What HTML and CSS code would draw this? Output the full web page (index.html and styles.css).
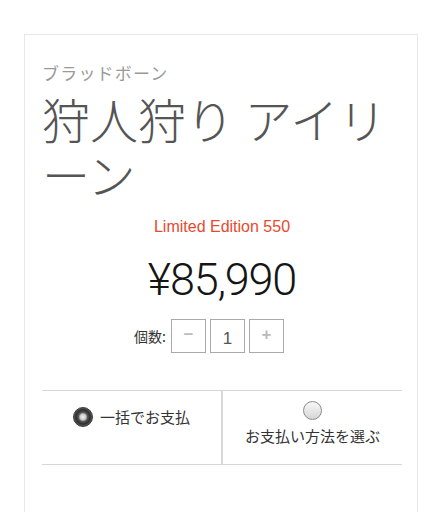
FILE: index.html
```html
<!DOCTYPE html>
<html lang="ja">
<head>
  <meta charset="UTF-8">
  <meta name="viewport" content="width=device-width, initial-scale=1.0">
  <title>狩人狩り アイリーン</title>
  <link rel="stylesheet" href="styles.css">
</head>
<body>
  <div class="product">
    <p class="brand">ブラッドボーン</p>
    <h1 class="title">狩人狩り アイリーン</h1>
    <p class="edition">Limited Edition 550</p>
    <p class="price">¥85,990</p>

    <div class="qty">
      <span class="qty-label">個数:</span>
      <span class="qty-btn">−</span>
      <span class="qty-value">1</span>
      <span class="qty-btn">+</span>
    </div>

    <!-- payment choice -->
    <div class="pay">
      <div class="pay-opt inline">
        <span class="radio checked"></span>
        <span>一括でお支払</span>
      </div>
      <div class="pay-opt stacked">
        <span class="radio"></span>
        <span>お支払い方法を選ぶ</span>
      </div>
    </div>
  </div>
</body>
</html>
```

FILE: styles.css
```css
body {
  margin: 0;
  padding: 34px 26px 0 24px;
  background: white;
  font-family: "Noto Sans CJK JP", "Liberation Sans", sans-serif;
}

.product {
  border: 1px solid #e4e8e8;
  border-bottom: none;
  padding: 26px 15px 40px 17px;
  height: 440px;
}

.brand {
  margin: 0;
  font-size: 17px;
  line-height: 24px;
  letter-spacing: 1.2px;
  color: #999;
}

.title {
  margin: 6px 0 0 0;
  font-size: 48px;
  line-height: 55px;
  font-weight: 300;
  color: #555;
}

.edition {
  margin: 16px 0 0 0;
  text-align: center;
  font-family: "Liberation Sans", Arial, sans-serif;
  font-size: 16px;
  line-height: 20px;
  color: #e8492e;
}

.price {
  margin: 18px 0 0 0;
  text-align: center;
  font-family: Roboto, "Liberation Sans", sans-serif;
  font-weight: 300;
  font-size: 45px;
  line-height: 50px;
  letter-spacing: -1.2px;
  color: #151515;
}

.qty {
  margin-top: 14px;
  padding-right: 26px;
  display: flex;
  justify-content: center;
  align-items: center;
  gap: 4px;
}

.qty-label {
  font-size: 14px;
  color: #333;
  margin-right: 1px;
}

.qty-btn,
.qty-value {
  box-sizing: border-box;
  width: 35px;
  height: 34px;
  border: 1px solid #aaa;
  display: flex;
  justify-content: center;
  font-family: "Liberation Sans", Arial, sans-serif;
}

.qty-btn {
  align-items: center;
  padding-bottom: 3px;
  font-size: 17px;
  font-weight: bold;
  color: #bbb;
}

.qty-value {
  align-items: flex-end;
  padding-bottom: 3px;
  font-size: 17px;
  color: #555;
}

.pay {
  margin-top: 37px;
  display: flex;
  border-top: 1px solid #d8d8d8;
  border-bottom: 1px solid #d8d8d8;
  height: 73px;
  font-size: 15px;
  color: #333;
}

.pay-opt {
  flex: 1;
  display: flex;
}

.pay-opt.inline {
  justify-content: center;
  align-items: flex-start;
  gap: 7px;
  padding-top: 16px;
  line-height: 20px;
  border-right: 2px solid #d8d8d8;
}

.pay-opt.stacked {
  flex-direction: column;
  justify-content: flex-start;
  align-items: center;
  padding-top: 10px;
  line-height: 20px;
}

.pay-opt.stacked .radio {
  margin-bottom: 6px;
}

.radio {
  box-sizing: border-box;
  width: 19px;
  height: 19px;
  border-radius: 50%;
  border: 1px solid #8a8a8a;
  background: linear-gradient(#f8f8f8, #d6d6d6);
  flex: none;
}

.radio.checked {
  width: 20px;
  height: 20px;
  border: 1px solid #3a3a3a;
  background: radial-gradient(circle, #f2f2f2 0, #c8c8c8 3px, #5a5a5a 4.5px, #2e2e2e 7px, #6a6a6a 10px);
}
```
